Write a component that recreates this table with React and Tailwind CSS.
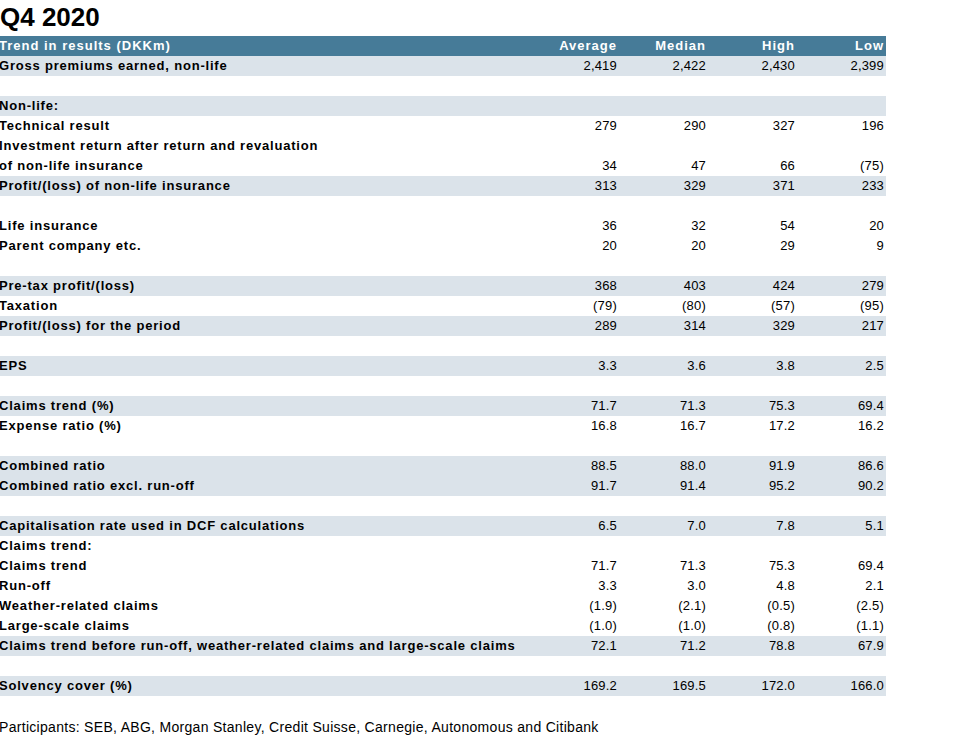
import React from "react";

// rows of the Q4 2020 consensus table; null = blank spacer row
const rows = [
  { label: "Gross premiums earned, non-life", v: ["2,419", "2,422", "2,430", "2,399"], shade: true },
  null,
  { label: "Non-life:", v: ["", "", "", ""], shade: true },
  { label: "Technical result", v: ["279", "290", "327", "196"] },
  { label: "Investment return after return and revaluation", v: ["", "", "", ""] },
  { label: "of non-life insurance", v: ["34", "47", "66", "(75)"] },
  { label: "Profit/(loss) of non-life insurance", v: ["313", "329", "371", "233"], shade: true },
  null,
  { label: "Life insurance", v: ["36", "32", "54", "20"] },
  { label: "Parent company etc.", v: ["20", "20", "29", "9"] },
  null,
  { label: "Pre-tax profit/(loss)", v: ["368", "403", "424", "279"], shade: true },
  { label: "Taxation", v: ["(79)", "(80)", "(57)", "(95)"] },
  { label: "Profit/(loss) for the period", v: ["289", "314", "329", "217"], shade: true },
  null,
  { label: "EPS", v: ["3.3", "3.6", "3.8", "2.5"], shade: true },
  null,
  { label: "Claims trend (%)", v: ["71.7", "71.3", "75.3", "69.4"], shade: true },
  { label: "Expense ratio (%)", v: ["16.8", "16.7", "17.2", "16.2"] },
  null,
  { label: "Combined ratio", v: ["88.5", "88.0", "91.9", "86.6"], shade: true },
  { label: "Combined ratio excl. run-off", v: ["91.7", "91.4", "95.2", "90.2"], shade: true },
  null,
  { label: "Capitalisation rate used in DCF calculations", v: ["6.5", "7.0", "7.8", "5.1"], shade: true },
  { label: "Claims trend:", v: ["", "", "", ""] },
  { label: "Claims trend", v: ["71.7", "71.3", "75.3", "69.4"] },
  { label: "Run-off", v: ["3.3", "3.0", "4.8", "2.1"] },
  { label: "Weather-related claims", v: ["(1.9)", "(2.1)", "(0.5)", "(2.5)"] },
  { label: "Large-scale claims", v: ["(1.0)", "(1.0)", "(0.8)", "(1.1)"] },
  { label: "Claims trend before run-off, weather-related claims and large-scale claims", v: ["72.1", "71.2", "78.8", "67.9"], shade: true },
  null,
  { label: "Solvency cover (%)", v: ["169.2", "169.5", "172.0", "166.0"], shade: true },
];

const grid = "grid grid-cols-[1fr_89px_89px_89px_89px] h-[20px] leading-[20px] text-[13px]";

export default function App() {
  return (
    <div className="w-[961px] h-[748px] bg-white text-black overflow-hidden font-['Liberation_Sans',Arial,sans-serif]">
      {/* title */}
      <div className="h-[36px] pt-[2px] text-[26px] leading-[30px] font-bold">Q4 2020</div>

      <div className="w-[886px]">
        {/* header */}
        <div className={`${grid} bg-[#467b98] text-white font-bold tracking-[1px]`}>
          <div className="-ml-px whitespace-nowrap">Trend in results (DKKm)</div>
          {["Average", "Median", "High", "Low"].map((h) => (
            <div key={h} className="text-right pr-[2px]">{h}</div>
          ))}
        </div>

        {rows.map((r, i) =>
          r === null ? (
            <div key={i} className="h-[20px]" />
          ) : (
            <div key={i} className={`${grid} ${r.shade ? "bg-[#dbe3ea]" : ""}`}>
              <div className="-ml-px whitespace-nowrap font-bold tracking-[0.8px]">{r.label}</div>
              {r.v.map((v, j) => (
                <div key={j} className="text-right pr-[2px] tracking-[0.2px]">{v}</div>
              ))}
            </div>
          )
        )}
      </div>

      {/* footnote */}
      <div className="mt-[21px] -ml-px text-[14px] leading-[20px] tracking-[0.3px]">
        Participants: SEB, ABG, Morgan Stanley, Credit Suisse, Carnegie, Autonomous and Citibank
      </div>
    </div>
  );
}
